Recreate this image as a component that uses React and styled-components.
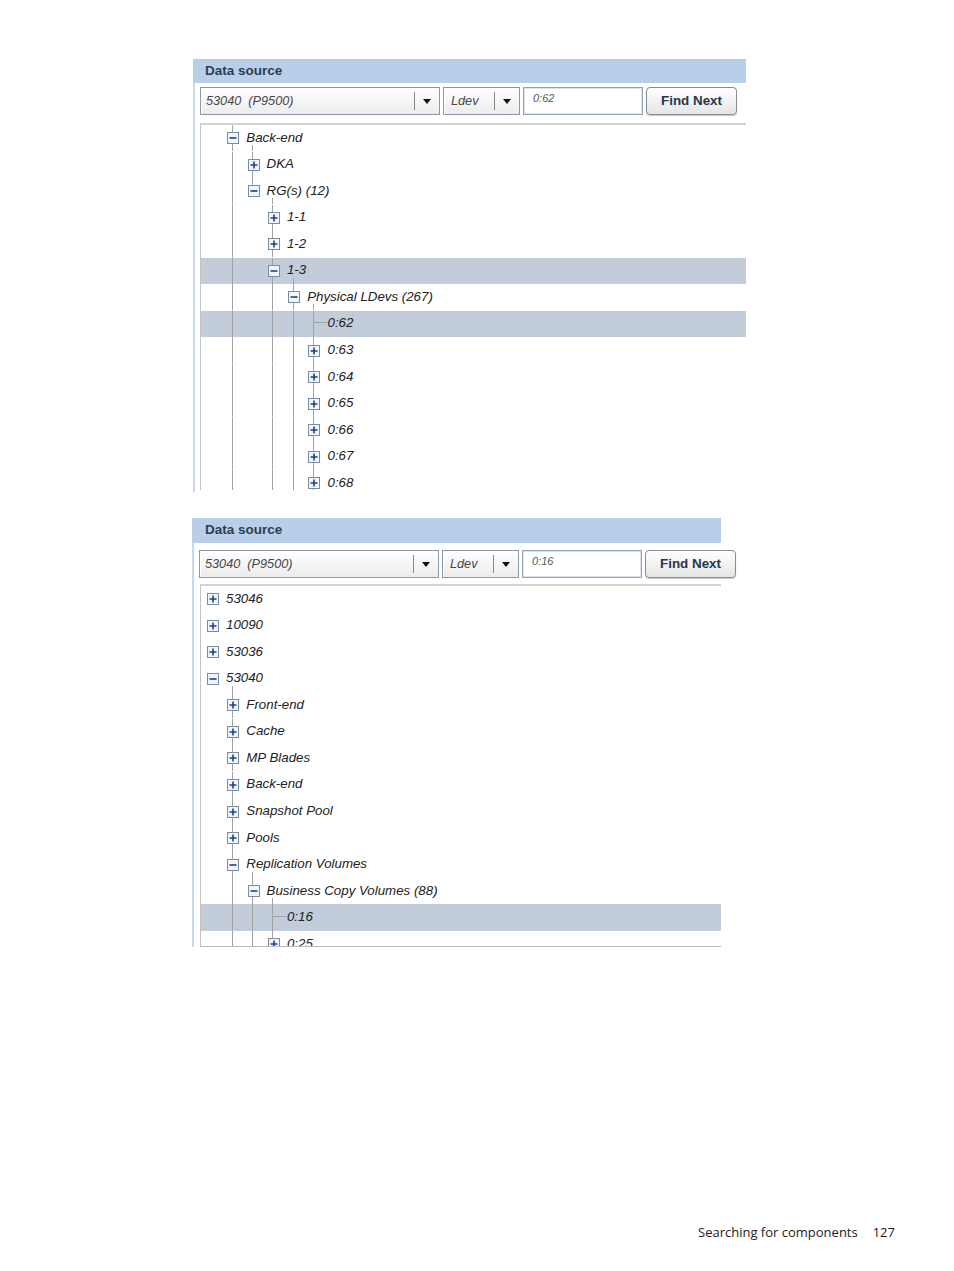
import React from 'react';
import styled, { createGlobalStyle } from 'styled-components';

const GlobalStyle = createGlobalStyle`
  html, body { margin: 0; padding: 0; background: #ffffff; }
  body { font-family: "Liberation Sans", Arial, sans-serif; }
  * { box-sizing: border-box; }
`;

const ROW_H = 26.54;
const INDENT = 20.3;
const LINE = '#a2a2a2';
const LX = 4.5;
const MID = ROW_H / 2;
const HANDLE_W = 19;

const seg = (x, y, w, h) =>
  `linear-gradient(${LINE}, ${LINE}) no-repeat ${x}px ${y}px / ${w}px ${h}px`;

const Page = styled.div`
  min-height: 1271px;
  display: flex;
  flex-direction: column;
  padding-top: 59px;
`;

const Panel = styled.section`
  margin-left: ${(p) => p.$left}px;
  margin-top: ${(p) => p.$top || 0}px;
  width: ${(p) => p.$width}px;
`;

const Header = styled.div`
  height: ${(p) => p.$h}px;
  background: #b9cfe9;
  display: flex;
  align-items: center;
  padding-left: ${(p) => p.$pad}px;
  padding-bottom: 2px;
  font: bold 13.5px "Liberation Sans", Arial, sans-serif;
  color: #2c3d52;
`;

const Body = styled.div`
  border-left: 2px solid #c8d9ee;
  padding: ${(p) => p.$pt}px 0 ${(p) => p.$pb}px ${(p) => p.$pl}px;
`;

const Toolbar = styled.div`
  display: flex;
  gap: 3px;
  height: 28px;
`;

const Combo = styled.div`
  flex: 0 0 ${(p) => p.$w}px;
  height: 28px;
  border: 1px solid #8c98a5;
  background: linear-gradient(#ffffff, #ececec);
  box-shadow: inset 1px 1px 0 #ffffff;
  display: flex;
  align-items: center;
`;

const ComboText = styled.span`
  flex: 1;
  padding-left: ${(p) => p.$pl}px;
  padding-bottom: 1px;
  font: italic 12.7px "Liberation Sans", Arial, sans-serif;
  color: #474747;
  white-space: pre;
`;

const ComboDivider = styled.span`
  width: 1px;
  height: 18px;
  background: #8a8a8a;
`;

const ComboArrow = styled.span`
  flex: 0 0 24px;
  display: flex;
  justify-content: center;
  align-items: center;
  &::after {
    content: '';
    border-left: 4px solid transparent;
    border-right: 4px solid transparent;
    border-top: 5px solid #111111;
    margin-top: 1px;
  }
`;

const SearchBox = styled.div`
  flex: 0 0 120px;
  height: 28px;
  border: 1px solid #8fa5bb;
  box-shadow: inset 0 0 0 1px #dbe4ee;
  background: #ffffff;
  padding: 4px 0 0 9px;
  font: italic 11px "Liberation Sans", Arial, sans-serif;
  color: #555555;
`;

const FindButton = styled.button`
  flex: 0 0 91px;
  height: 28px;
  border: 1px solid #8c8c8c;
  border-radius: 4px;
  background: linear-gradient(#ffffff, #e5e5e5);
  box-shadow: 0 1px 1px rgba(0, 0, 0, 0.22);
  font: bold 13.4px "Liberation Sans", Arial, sans-serif;
  color: #27374a;
  padding: 0 0 2px 0;
  display: flex;
  align-items: center;
  justify-content: center;
`;

const Tree = styled.div`
  margin-top: ${(p) => p.$mt}px;
  margin-left: ${(p) => p.$ml}px;
  height: ${(p) => p.$h}px;
  border-top: 2px solid #d3d3d3;
  border-left: 1px solid #c3c3c3;
  border-bottom: ${(p) => (p.$bottom ? '1px solid #bcbcbc' : 'none')};
  overflow: hidden;
`;

const Row = styled.div`
  height: ${ROW_H}px;
  flex-shrink: 0;
  display: flex;
  align-items: stretch;
  padding-left: 6px;
  background: ${(p) => (p.$selected ? '#c3cdda' : 'transparent')};
`;

const Guide = styled.span`
  flex: 0 0 ${INDENT}px;
  background: ${(p) => (p.$on ? seg(LX, 0, 1, ROW_H) : 'none')};
`;

const Handle = styled.span`
  flex: 0 0 ${HANDLE_W}px;
  display: flex;
  align-items: center;
  background: ${(p) => p.$bg};
`;

const Label = styled.span`
  display: flex;
  align-items: center;
  padding-bottom: 2px;
  font: italic 13.3px "Liberation Sans", Arial, sans-serif;
  color: #222222;
  white-space: nowrap;
  background: ${(p) =>
    p.$open ? seg(INDENT + LX - HANDLE_W, MID + 7, 1, ROW_H - MID - 7) : 'none'};
`;

const BoxIcon = styled.svg`
  display: block;
  flex-shrink: 0;
`;

const Footer = styled.footer`
  margin-top: auto;
  padding: 0 59px 30px 0;
  display: flex;
  justify-content: flex-end;
  gap: 15px;
  font: 13px "Open Sans", sans-serif;
  line-height: 18px;
  color: #222222;
`;

const Expander = ({ open }) => (
  <BoxIcon width="12" height="12" viewBox="0 0 12 12">
    <rect x="0.5" y="0.5" width="11" height="11" fill="#f1f5f9" stroke="#7b8ca0" />
    <path d={open ? 'M2.5 6H9.5' : 'M2.5 6H9.5M6 2.5V9.5'} stroke="#1b4778" strokeWidth="1.6" />
  </BoxIcon>
);

function handleBg(it) {
  const parts = [];
  if (it.level > 0) {
    if (it.leaf) {
      const y = MID - 2;
      parts.push(seg(LX, 0, 1, y + 1));
      parts.push(seg(LX, y, HANDLE_W - LX, 1));
      if (it.next) parts.push(seg(LX, y, 1, ROW_H - y));
    } else {
      parts.push(seg(LX, 0, 1, MID));
      if (it.next) parts.push(seg(LX, MID, 1, ROW_H - MID));
    }
  }
  return parts.length ? parts.join(', ') : 'none';
}

function buildRows(items) {
  return items.map((it, i) => {
    const guides = [];
    for (let k = 0; k < it.level; k++) {
      let on = false;
      if (k > 0) {
        for (let j = i - 1; j >= 0; j--) {
          if (items[j].level === k) {
            on = !!items[j].next;
            break;
          }
          if (items[j].level < k) break;
        }
      }
      guides.push(on);
    }
    return { ...it, guides };
  });
}

const tree1 = buildRows([
  { label: 'Back-end', level: 1, open: true, next: true },
  { label: 'DKA', level: 2, next: true },
  { label: 'RG(s) (12)', level: 2, open: true },
  { label: '1-1', level: 3, next: true },
  { label: '1-2', level: 3, next: true },
  { label: '1-3', level: 3, open: true, next: true, selected: true },
  { label: 'Physical LDevs (267)', level: 4, open: true, next: true },
  { label: '0:62', level: 5, leaf: true, next: true, selected: true },
  { label: '0:63', level: 5, next: true },
  { label: '0:64', level: 5, next: true },
  { label: '0:65', level: 5, next: true },
  { label: '0:66', level: 5, next: true },
  { label: '0:67', level: 5, next: true },
  { label: '0:68', level: 5, next: true },
]);

const tree2 = buildRows([
  { label: '53046', level: 0 },
  { label: '10090', level: 0 },
  { label: '53036', level: 0 },
  { label: '53040', level: 0, open: true },
  { label: 'Front-end', level: 1, next: true },
  { label: 'Cache', level: 1, next: true },
  { label: 'MP Blades', level: 1, next: true },
  { label: 'Back-end', level: 1, next: true },
  { label: 'Snapshot Pool', level: 1, next: true },
  { label: 'Pools', level: 1, next: true },
  { label: 'Replication Volumes', level: 1, open: true, next: true },
  { label: 'Business Copy Volumes (88)', level: 2, open: true, next: true },
  { label: '0:16', level: 3, leaf: true, next: true, selected: true },
  { label: '0:25', level: 3, next: true },
]);

const TreeRows = ({ rows }) =>
  rows.map((it, i) => (
    <Row key={i} $selected={it.selected}>
      {it.guides.map((on, k) => (
        <Guide key={k} $on={on} />
      ))}
      <Handle $bg={handleBg(it)}>{!it.leaf && <Expander open={it.open} />}</Handle>
      <Label $open={it.open}>{it.label}</Label>
    </Row>
  ));

const DataSource = ({ search }) => (
  <Toolbar>
    <Combo $w={240}>
      <ComboText $pl={5}>{'53040  (P9500)'}</ComboText>
      <ComboDivider />
      <ComboArrow />
    </Combo>
    <Combo $w={77}>
      <ComboText $pl={7}>Ldev</ComboText>
      <ComboDivider />
      <ComboArrow />
    </Combo>
    <SearchBox>{search}</SearchBox>
    <FindButton type="button">Find Next</FindButton>
  </Toolbar>
);

export default function App() {
  return (
    <Page>
      <GlobalStyle />
      <Panel $left={193} $width={553}>
        <Header $h={24} $pad={12}>Data source</Header>
        <Body $pt={4} $pb={2} $pl={5}>
          <DataSource search="0:62" />
          <Tree $mt={8} $ml={0} $h={367}>
            <TreeRows rows={tree1} />
          </Tree>
        </Body>
      </Panel>
      <Panel $left={192} $width={529} $top={26}>
        <Header $h={25} $pad={13}>Data source</Header>
        <Body $pt={7} $pb={0} $pl={5}>
          <DataSource search="0:16" />
          <Tree $mt={6} $ml={1} $h={363} $bottom>
            <TreeRows rows={tree2} />
          </Tree>
        </Body>
      </Panel>
      <Footer>
        <span>Searching for components</span>
        <span>127</span>
      </Footer>
    </Page>
  );
}
